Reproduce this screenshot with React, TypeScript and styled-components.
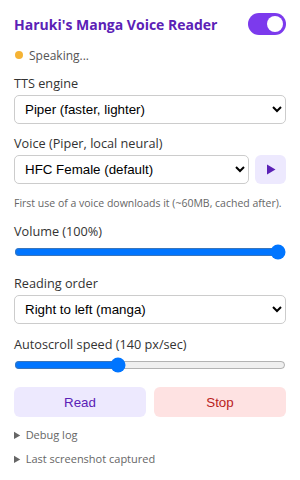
import React, { useState } from "react";
import styled, { createGlobalStyle } from "styled-components";

const Global = createGlobalStyle`
  html, body { margin: 0; padding: 0; background: #fff; }
  body { font-family: "Open Sans", "Noto Sans", sans-serif; color: #222; }
`;

const Panel = styled.div`
  width: 272px;
  padding: 13px 14px 12px 14px;
  display: flex;
  flex-direction: column;
`;

const Header = styled.div`
  display: flex;
  align-items: center;
  justify-content: space-between;
  height: 22px;
`;

const Title = styled.h1`
  margin: 0;
  font-size: 14px;
  font-weight: 700;
  color: #5b21b6;
`;

const Toggle = styled.button<{ $on: boolean }>`
  width: 38px;
  height: 22px;
  border: none;
  padding: 0;
  border-radius: 11px;
  background: ${(p) => (p.$on ? "#7c3aed" : "#ccc")};
  position: relative;
  cursor: pointer;
  &::after {
    content: "";
    position: absolute;
    top: 3px;
    left: ${(p) => (p.$on ? "19px" : "3px")};
    width: 16px;
    height: 16px;
    border-radius: 50%;
    background: #fff;
  }
`;

const Status = styled.div`
  display: flex;
  align-items: center;
  gap: 6px;
  margin-top: 12px;
  font-size: 12px;
  color: #555;
  height: 16px;
`;

const Dot = styled.span`
  width: 8px;
  height: 8px;
  border-radius: 50%;
  background: #f5b335;
  margin-left: 1px;
`;

const Field = styled.div<{ $mt?: number }>`
  display: flex;
  flex-direction: column;
  margin-top: ${(p) => p.$mt ?? 10}px;
`;

const Label = styled.label`
  font-size: 12.7px;
  color: #333;
  line-height: 17px;
  margin-bottom: 3px;
`;

const Select = styled.select`
  width: 100%;
  height: 29px;
  border: 1px solid #ccc;
  border-radius: 5px;
  background: #fff;
  padding: 0 6px;
  font-family: "Liberation Sans", Arial, sans-serif;
  font-size: 13.33px;
  color: #000;
`;

const Row = styled.div`
  display: flex;
  gap: 6px;
`;

const PlayButton = styled.button`
  flex: 0 0 31px;
  height: 29px;
  border: none;
  border-radius: 6px;
  background: #ede9fe;
  display: flex;
  align-items: center;
  justify-content: center;
  padding: 0;
`;

const Help = styled.div`
  font-size: 10.5px;
  color: #666;
  margin-top: 12px;
  line-height: 14px;
  white-space: nowrap;
`;

const Range = styled.input`
  width: 100%;
  margin: 1px 0 0 0;
`;

const Buttons = styled.div`
  display: grid;
  grid-template-columns: 1fr 1fr;
  gap: 8px;
  margin-top: 14px;
`;

const ActionButton = styled.button<{ $variant: "read" | "stop" }>`
  height: 30px;
  border: none;
  border-radius: 6px;
  font-family: "Liberation Sans", Arial, sans-serif;
  font-size: 13.33px;
  background: ${(p) => (p.$variant === "read" ? "#ede9fe" : "#fee2e2")};
  color: ${(p) => (p.$variant === "read" ? "#5b21b6" : "#b91c1c")};
  cursor: pointer;
`;

const Details = styled.details`
  font-size: 11px;
  color: #666;
  margin-top: 10px;
  & + & { margin-top: 9px; }
  summary { cursor: pointer; line-height: 15px; }
`;

export default function App() {
  const [on, setOn] = useState(true);
  return (
    <>
      <Global />
      <Panel>
        <Header>
          <Title>Haruki's Manga Voice Reader</Title>
          <Toggle $on={on} onClick={() => setOn(!on)} aria-label="Enable" />
        </Header>
        <Status>
          <Dot />
          <span>Speaking...</span>
        </Status>
        <Field $mt={12}>
          <Label>TTS engine</Label>
          <Select defaultValue="piper">
            <option value="piper">Piper (faster, lighter)</option>
            <option value="kokoro">Kokoro</option>
          </Select>
        </Field>
        <Field $mt={11}>
          <Label>Voice (Piper, local neural)</Label>
          <Row>
            <Select defaultValue="hfc">
              <option value="hfc">HFC Female (default)</option>
            </Select>
            <PlayButton aria-label="Preview">
              <svg width="10" height="11" viewBox="0 0 10 11">
                <polygon points="1,0.5 9.5,5.5 1,10.5" fill="#5b21b6" />
              </svg>
            </PlayButton>
          </Row>
          <Help>First use of a voice downloads it (~60MB, cached after).</Help>
        </Field>
        <Field $mt={13}>
          <Label>Volume (100%)</Label>
          <Range type="range" min={0} max={100} defaultValue={100} />
        </Field>
        <Field $mt={15}>
          <Label>Reading order</Label>
          <Select defaultValue="rtl">
            <option value="rtl">Right to left (manga)</option>
            <option value="ltr">Left to right</option>
          </Select>
        </Field>
        <Field $mt={12}>
          <Label>Autoscroll speed (140 px/sec)</Label>
          <Range type="range" min={20} max={340} defaultValue={140} />
        </Field>
        <Buttons>
          <ActionButton $variant="read">Read</ActionButton>
          <ActionButton $variant="stop">Stop</ActionButton>
        </Buttons>
        <Details>
          <summary>Debug log</summary>
        </Details>
        <Details>
          <summary>Last screenshot captured</summary>
        </Details>
      </Panel>
    </>
  );
}
